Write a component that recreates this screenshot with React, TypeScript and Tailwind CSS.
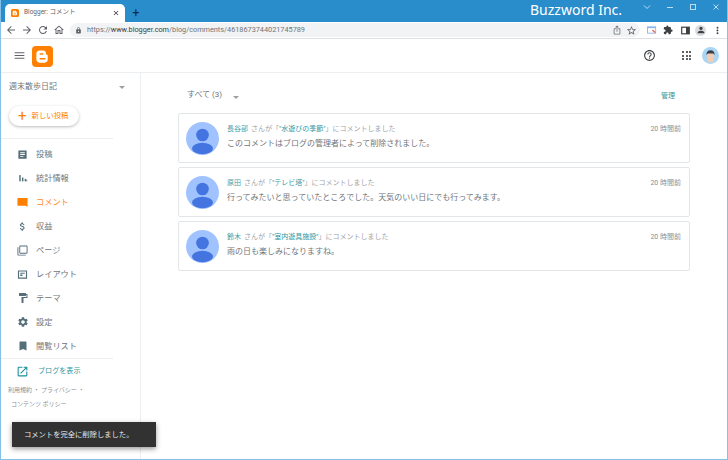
import type { ReactNode } from "react";
import {
  MdArrowBack,
  MdArrowForward,
  MdAttachMoney,
  MdBookmark,
  MdClose,
  MdExtension,
  MdFilterNone,
  MdFormatPaint,
  MdHelpOutline,
  MdLock,
  MdMenu,
  MdMoreVert,
  MdOpenInNew,
  MdOutlineHome,
  MdOutlineIosShare,
  MdPerson,
  MdRefresh,
  MdSettings,
  MdStarBorder,
} from "react-icons/md";

const FONT = "font-['Roboto','Noto_Sans_CJK_JP',sans-serif]";

function BloggerLogo({ size }: { size: number }) {
  return (
    <svg width={size} height={size} viewBox="0 0 24 24">
      <rect width="24" height="24" rx="4.5" fill="#ff8000" />
      <path
        d="M8.5 5h4.2c2 0 3.3 1.4 3.3 3.1v1c0 .6.4.9 1 .9.6 0 1 .4 1 1v4.5c0 2-1.5 3.5-3.500 3.500h-6c-2 0-3.500-1.500-3.500-3.500V8.500C5 6.500 6.500 5 8.500 5z"
        fill="#fff"
      />
      <rect x="8.500" y="8.300" width="4.500" height="1.700" rx=".85" fill="#ff8000" />
      <rect x="8.500" y="13.800" width="7" height="1.700" rx=".85" fill="#ff8000" />
    </svg>
  );
}

function PostsIcon() {
  return (
    <svg width="11" height="11" viewBox="0 0 24 24" fill="#546e7a">
      <path d="M21 3H3v18h18V3zm-7 14H7v-2h7v2zm3-4H7v-2h10v2zm0-4H7V7h10v2z" />
    </svg>
  );
}

function StatsIcon() {
  return (
    <svg width="10" height="10" viewBox="0 0 24 24" fill="#546e7a">
      <rect x="3" y="5" width="3.500" height="15" />
      <rect x="9.500" y="11" width="3.500" height="9" />
      <rect x="16" y="14" width="3.500" height="6" />
      <rect x="20" y="16" width="2" height="4" />
    </svg>
  );
}

function CommentIcon() {
  return (
    <svg width="11" height="11" viewBox="0 0 24 24" fill="#ff8000">
      <path d="M1 2h22v20l-4-3H1V2z" />
    </svg>
  );
}

function LayoutIcon() {
  return (
    <svg width="11" height="11" viewBox="0 0 24 24" fill="#546e7a">
      <path d="M2 3h20v18H2V3zm2.500 2.500v13h15v-13h-15z" />
      <path d="M7 8h10v2.500H7zM7 12h5v3H7z" />
    </svg>
  );
}

function Avatar() {
  return (
    <svg width="33" height="33" viewBox="0 0 33 33" className="shrink-0">
      <circle cx="16.500" cy="16.500" r="16.500" fill="#a0c3ff" />
      <circle cx="16.500" cy="13" r="6.300" fill="#4374e0" />
      <ellipse cx="16.500" cy="26.500" rx="10.500" ry="5.800" fill="#4374e0" />
    </svg>
  );
}

function UserAvatar() {
  return (
    <svg width="17" height="17" viewBox="0 0 16 16">
      <circle cx="8" cy="8" r="8" fill="#a9d6f5" />
      <path d="M4.500 9c0-3 1.300-4 3.500-4s3.500 1 3.500 4l-.5 4.500c-1.500 1.500-4.500 1.500-6 0z" fill="#f0cdb4" />
      <path d="M4.200 7.500C4 4.500 5.500 3 8 3s4 1.500 3.800 4.500L10.500 6h-5z" fill="#3b3f46" />
    </svg>
  );
}

function ToolButton({ children, className }: { children: ReactNode; className: string }) {
  return <div className={`flex h-3 w-3 shrink-0 items-center justify-center text-[#5f6368] ${className}`}>{children}</div>;
}

type NavEntry = { label: string; icon: ReactNode; active?: boolean };

const NAV: NavEntry[] = [
  { label: "投稿", icon: <PostsIcon /> },
  { label: "統計情報", icon: <StatsIcon /> },
  { label: "コメント", icon: <CommentIcon />, active: true },
  { label: "収益", icon: <MdAttachMoney size={11} color="#546e7a" /> },
  { label: "ページ", icon: <MdFilterNone size={11} color="#546e7a" /> },
  { label: "レイアウト", icon: <LayoutIcon /> },
  { label: "テーマ", icon: <MdFormatPaint size={12} color="#546e7a" /> },
  { label: "設定", icon: <MdSettings size={12} color="#546e7a" /> },
  { label: "閲覧リスト", icon: <MdBookmark size={12} color="#546e7a" /> },
];

type CommentEntry = { author: string; post: string; body: string };

const COMMENTS: CommentEntry[] = [
  { author: "長谷部", post: "\"水遊びの季節\"", body: "このコメントはブログの管理者によって削除されました。" },
  { author: "原田", post: "\"テレビ塔\"", body: "行ってみたいと思っていたところでした。天気のいい日にでも行ってみます。" },
  { author: "鈴木", post: "\"室内遊具施設\"", body: "雨の日も楽しみになりますね。" },
];

function TitleBar() {
  return (
    <div className="flex h-[22px] shrink-0 items-end bg-[#298ccb] pl-1">
      <div className="flex h-[18px] w-[120px] items-center rounded-t-[5px] bg-white pl-[6px] pr-[5px]">
        <BloggerLogo size={8} />
        <span className="ml-[5px] flex-1 text-[6.500px] text-[#5f6368]">Blogger: コメント</span>
        <MdClose size={8} color="#333" />
      </div>
      <div className="ml-[5px] flex h-[18px] w-3 items-center justify-center text-[12px] leading-none text-[#0e2a40]">+</div>
      <div className="flex h-[22px] flex-1 items-start">
        <span className="ml-[388px] mt-[-1px] whitespace-nowrap font-['Noto_Sans',sans-serif] text-[14px] leading-[22px] text-white">Buzzword Inc.</span>
        <div className="ml-auto mr-[7px] mt-[3px] flex items-center gap-[15px] text-[#bcdcf2]">
          <svg width="8" height="8" viewBox="0 0 8 8" fill="none" stroke="currentColor"><path d="M1 2.500l3 3 3-3" /></svg>
          <svg width="8" height="8" viewBox="0 0 8 8" fill="none" stroke="currentColor"><path d="M1 4.500h6" /></svg>
          <svg width="8" height="8" viewBox="0 0 8 8" fill="none" stroke="currentColor"><rect x="1.500" y="1.500" width="5" height="5" /></svg>
          <svg width="8" height="8" viewBox="0 0 8 8" fill="none" stroke="currentColor"><path d="M1.500 1.500l5 5M6.500 1.500l-5 5" /></svg>
        </div>
      </div>
    </div>
  );
}

function Toolbar() {
  return (
    <div className="flex h-[17px] shrink-0 items-center border-b border-[#dfe1e5] bg-white pl-1">
      <ToolButton className="ml-0"><MdArrowBack size={12} /></ToolButton>
      <ToolButton className="ml-1"><MdArrowForward size={12} /></ToolButton>
      <ToolButton className="ml-1"><MdRefresh size={12} /></ToolButton>
      <ToolButton className="ml-1"><MdOutlineHome size={12} /></ToolButton>
      <div className="ml-[5px] flex h-[14px] w-[570px] items-center rounded-full bg-[#f1f3f4] pl-[5px] pr-[3px]">
        <MdLock size={7} color="#5f6368" />
        <span className="ml-[5px] flex-1 text-[7.300px] leading-none text-[#70757a]">
          https://<span className="text-[#3c4043]">www.blogger.com</span>/blog/comments/4618673744021745789
        </span>
        <MdOutlineIosShare size={10} color="#70757a" />
        <MdStarBorder size={11} color="#5f6368" className="ml-[4px]" />
      </div>
      <svg width="10" height="10" viewBox="0 0 11 10" className="ml-[7px]">
        <rect width="10" height="8" y="1" fill="#8ab8ee" />
        <rect x="1" y="3" width="8" height="5" fill="#fff" />
        <path d="M6 5l3 3" stroke="#e0523f" strokeWidth="1.200" />
      </svg>
      <MdExtension size={10} color="#3c4043" className="ml-[6px]" />
      <svg width="9" height="9" viewBox="0 0 9 9" className="ml-[8px]" fill="none">
        <rect x=".7" y="1.200" width="7.600" height="6.600" stroke="#3c4043" strokeWidth="1.200" />
        <rect x="5" y="1" width="3" height="7" fill="#3c4043" />
      </svg>
      <div className="ml-[5px] flex h-[11px] w-[11px] items-center justify-center rounded-full bg-[#dadce0]">
        <MdPerson size={10} color="#3c4043" />
      </div>
      <MdMoreVert size={11} color="#3c4043" className="ml-[6px]" />
    </div>
  );
}

function AppHeader() {
  return (
    <div className="flex h-[34px] shrink-0 items-center border-b border-[#eceff1] pl-[12px] pr-[8px]">
      <MdMenu size={13} color="#5f6368" />
      <div className="ml-[6px] mt-[2px] flex"><BloggerLogo size={21} /></div>
      <div className="flex-1" />
      <MdHelpOutline size={13} color="#3c4043" />
      <div className="ml-[26px] grid grid-cols-3 gap-[1.500px]">
        {Array.from({ length: 9 }).map((_, i) => (
          <div key={i} className="h-[2px] w-[2px] bg-[#5f6368]" />
        ))}
      </div>
      <div className="ml-[11px] flex"><UserAvatar /></div>
    </div>
  );
}

function Sidebar() {
  return (
    <aside className="flex w-[140px] shrink-0 flex-col border-r border-[#eceff1]">
      <div className="mt-[8px] flex h-[12px] items-center pl-[8px] pr-[15px]">
        <span className="flex-1 text-[8px] leading-none text-[#70757a]">週末散歩日記</span>
        <div className="h-0 w-0 border-x-[3px] border-t-[3px] border-x-transparent border-t-[#9aa0a6]" />
      </div>
      <div className="ml-[8px] mt-[13px] flex h-[20px] w-[70px] items-center rounded-full bg-white pl-[9px] shadow-[0_1px_3px_rgba(60,64,67,0.35)]">
        <span className="text-[15px] leading-none text-[#ff8000]">+</span>
        <span className="ml-[5px] text-[7.400px] leading-none text-[#ff8000]">新しい投稿</span>
      </div>
      <div className="mt-[12px] w-[112px] border-t border-[#eceff1]" />
      <nav className="mt-[3px] flex flex-col">
        {NAV.map((item) => (
          <div key={item.label} className="flex h-[24px] items-center pl-[15px]">
            <div className="flex w-[13px] justify-center">{item.icon}</div>
            <span className={`ml-[7px] text-[8.200px] leading-none ${item.active ? "text-[#ff8a1f]" : "text-[#70757a]"}`}>{item.label}</span>
          </div>
        ))}
      </nav>
      <div className="w-[112px] border-t border-[#eceff1]" />
      <div className="mt-[5px] flex h-[14px] items-center pl-[15px]">
        <MdOpenInNew size={13} color="#1f8f9c" />
        <span className="ml-[9px] text-[7.100px] leading-none text-[#2f98a3]">ブログを表示</span>
      </div>
      <div className="ml-[7px] mt-[5px] text-[6px] leading-[14px] text-[#8a8f94]">
        <div>利用規約 ・ プライバシー ・</div>
        <div className="ml-[3px]">コンテンツ ポリシー</div>
      </div>
    </aside>
  );
}

function CommentCard({ comment }: { comment: CommentEntry }) {
  return (
    <div className="flex h-[50px] items-start rounded-[2px] border border-[#e3e6e8] bg-white pl-[7px] pr-[8px] pt-[8px]">
      <Avatar />
      <div className="ml-[8px] min-w-0 flex-1">
        <div className="mt-[3px] flex h-[9px] items-center text-[7px] leading-none text-[#a0a5aa]">
          <span className="text-[#4aa0a8]">{comment.author}</span>
          <span className="ml-[3px]">さんが「</span>
          <span className="text-[#2f98a3]">{comment.post}</span>
          <span>」にコメントしました</span>
          <span className="ml-auto text-[7px] text-[#8a8f94]">20 時間前</span>
        </div>
        <p className="mt-[5px] text-[8px] leading-[10px] text-[#70757a]">{comment.body}</p>
      </div>
    </div>
  );
}

function CommentList() {
  return (
    <main className="min-w-0 flex-1 pl-[37px] pr-[37px]">
      <div className="flex h-[40px] items-center pl-[9px] pr-[15px]">
        <span className="mt-[4px] text-[8px] leading-none text-[#70757a]">すべて (3)</span>
        <div className="ml-[11px] mt-[8px] h-0 w-0 border-x-[3px] border-t-[3px] border-x-transparent border-t-[#9aa0a6]" />
        <span className="ml-auto mt-[6px] text-[7px] leading-none text-[#2f98a3]">管理</span>
      </div>
      <div className="flex flex-col gap-[4px]">
        {COMMENTS.map((c) => (
          <CommentCard key={c.author} comment={c} />
        ))}
      </div>
    </main>
  );
}

export default function App() {
  return (
    <div className={`relative flex h-[460px] w-[728px] flex-col overflow-hidden border-x border-b border-[#84c0e8] bg-white ${FONT}`}>
      <TitleBar />
      <Toolbar />
      <AppHeader />
      <div className="flex min-h-0 flex-1">
        <Sidebar />
        <CommentList />
      </div>
      {/* snackbar */}
      <div className="absolute bottom-[12px] left-[11px] flex h-[25px] w-[144px] items-center bg-[#323232] pl-[12px] shadow-[0_2px_5px_rgba(0,0,0,0.4)]">
        <span className="text-[7.300px] leading-none text-[#e8eaed]">コメントを完全に削除しました。</span>
      </div>
    </div>
  );
}
